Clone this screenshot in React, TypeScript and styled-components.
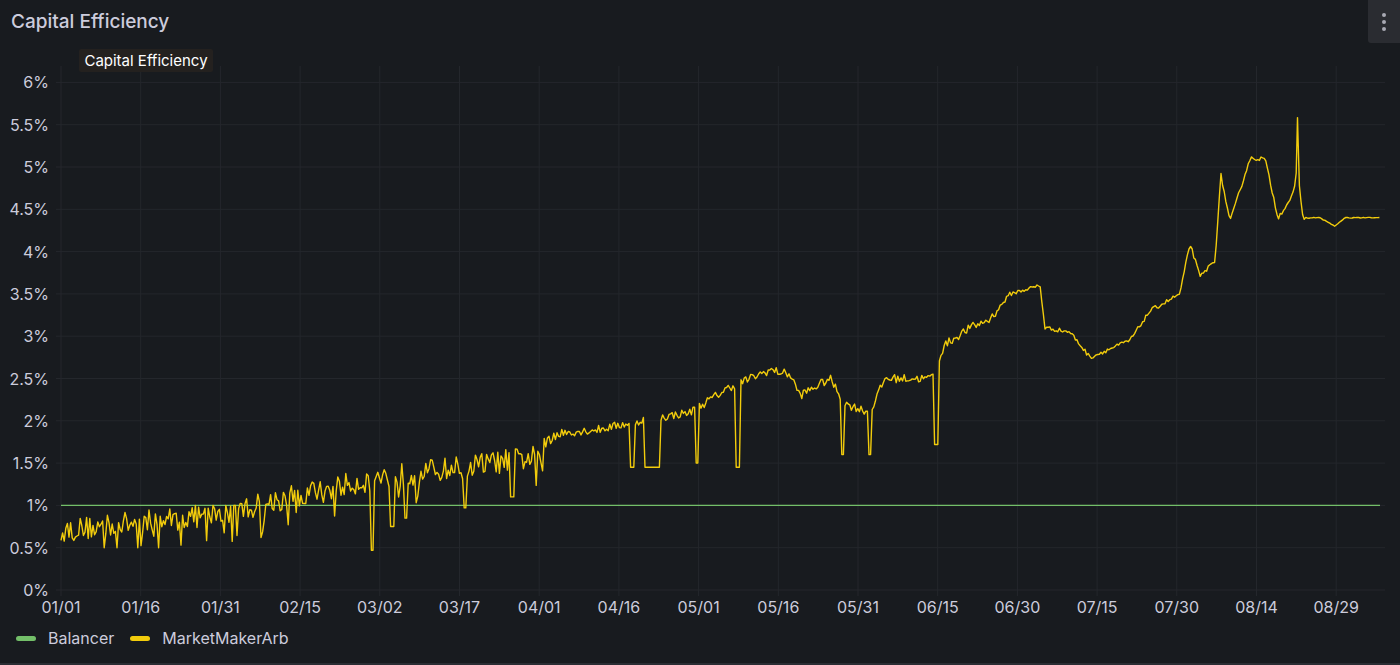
import React from "react";
import styled, { createGlobalStyle } from "styled-components";

const Global = createGlobalStyle`
  html, body { margin: 0; padding: 0; background: #111217; }
  body { font-family: Inter, "Noto Sans", sans-serif; }
`;

const Panel = styled.div`
  width: 1400px; height: 665px; box-sizing: border-box;
  background: #181b1f; border-bottom: 2px solid #2a2d33;
  display: flex; flex-direction: column; overflow: hidden;
`;
const Header = styled.div`
  height: 44px; display: flex; align-items: flex-start; justify-content: space-between;
`;
const Title = styled.h2`
  margin: 0; padding: 10px 0 0 11px; font-size: 19px; font-weight: 500; color: #ccccdc;
`;
const MenuButton = styled.div`
  width: 32px; height: 43px; background: #2a2c31; border-bottom-left-radius: 3px;
  display: flex; flex-direction: column; align-items: center; justify-content: center; gap: 3px;
`;
const Dot = styled.span`
  width: 4px; height: 4px; border-radius: 50%; background: #a8a9b3;
`;
const Chart = styled.svg`
  display: block; width: 1400px; height: 578px;
  font-family: Inter, "Noto Sans", sans-serif;
`;
const Legend = styled.div`
  display: flex; align-items: center; gap: 16px; padding: 6px 0 0 16px;
  font-size: 16px; color: #ccccdc;
`;
const LegendItem = styled.div`
  display: flex; align-items: center; gap: 12px;
`;
const Swatch = styled.span<{ $c: string }>`
  width: 20px; height: 5px; border-radius: 3px; background: ${p => p.$c};
`;

const X0 = 61, XS = 79.7;
const yOf = (v: number) => 590 - v * 84.6;
const xLabels = ["01/01","01/16","01/31","02/15","03/02","03/17","04/01","04/16","05/01","05/16","05/31","06/15","06/30","07/15","07/30","08/14","08/29"];
const yLabels = ["0%","0.5%","1%","1.5%","2%","2.5%","3%","3.5%","4%","4.5%","5%","5.5%","6%"];

const keys: [number, number][] = [
  [61,0.7],[140,0.8],[220,0.9],[300,1.12],[380,1.33],[460,1.45],[540,1.58],[555,1.85],[600,1.9],[640,2.0],[690,2.1],[730,2.4],[770,2.6],[790,2.55],[800,2.3],[830,2.5],[845,2.2],[870,2.1],[885,2.5],[930,2.5],[945,2.9],[970,3.1],[990,3.2],[1010,3.5],[1040,3.6],[1045,3.1],[1070,3.05],[1090,2.75],[1110,2.85],[1130,2.95],[1150,3.3],[1180,3.5],[1190,4.1],[1200,3.7],[1215,3.9],[1221,4.9],[1230,4.35],[1250,5.1],[1265,5.1],[1278,4.4],[1292,4.65],[1296,4.8],[1297.5,5.6],[1299,4.8],[1303,4.4],[1320,4.4],[1335,4.3],[1345,4.4],[1380,4.4]
];
const dips: [number, number, number][] = [
  [372,0.47,2],[392,0.75,2],[632,1.45,2],[652,1.45,8],[697,1.5,2],[738,1.45,2],[843,1.6,2],[870,1.6,2],[936,1.72,2],[512,1.1,2],[465,0.97,2],[406,0.85,2]
];

function base(x: number) {
  for (let i = 0; i < keys.length - 1; i++) {
    const [a, va] = keys[i], [b, vb] = keys[i + 1];
    if (x >= a && x <= b) return va + (vb - va) * (x - a) / (b - a);
  }
  return 4.4;
}

function buildPath() {
  let s = 12345;
  const rnd = () => { s = (s * 16807) % 2147483647; return s / 2147483647; };
  const xs: number[] = [];
  for (let x = 61; x <= 1380; x += 1.6) xs.push(x);
  xs.push(1297.5);
  xs.sort((a, b) => a - b);
  const pts: string[] = [];
  for (const x of xs) {
    let v = base(x);
    const amp = x < 560 ? 0.14 : x < 1000 ? 0.05 : 0.025;
    v += (rnd() - 0.5) * 2 * amp;
    if (x < 560 && rnd() < 0.08) v -= 0.15 + rnd() * 0.25;
    if (x < 240 && v > 1.0) v = 1.0;
    if (x < 240 && v < 0.5) v = 0.5;
    if (x > 1305) v = base(x) + (rnd() - 0.5) * 0.01;
    for (const [dx, dv, w] of dips) if (Math.abs(x - dx) < w) v = dv;
    pts.push(`${x.toFixed(1)},${yOf(v).toFixed(1)}`);
  }
  return "M" + pts.join("L");
}
const path = buildPath();

export default function App() {
  return (
    <Panel>
      <Global />
      <Header>
        <Title>Capital Efficiency</Title>
        <MenuButton><Dot /><Dot /><Dot /></MenuButton>
      </Header>
      <Chart viewBox="0 44 1400 578">
        {yLabels.map((l, i) => (
          <g key={l}>
            <line x1={56} x2={1385} y1={yOf(i * 0.5)} y2={yOf(i * 0.5)} stroke="#24272c" strokeWidth={1} />
            <text x={49} y={yOf(i * 0.5) + 6} textAnchor="end" fill="#ccccdc" fontSize={16}>{l}</text>
          </g>
        ))}
        {xLabels.map((l, i) => (
          <g key={l}>
            <line x1={X0 + i * XS} x2={X0 + i * XS} y1={66} y2={596} stroke="#24272c" strokeWidth={1} />
            <text x={X0 + i * XS} y={613} textAnchor="middle" fill="#ccccdc" fontSize={16}>{l}</text>
          </g>
        ))}
        <line x1={61} x2={1380} y1={yOf(1)} y2={yOf(1)} stroke="#73bf69" strokeWidth={1.2} />
        <path d={path} fill="none" stroke="#f2cc0c" strokeWidth={1.4} strokeLinejoin="round" />
        <rect x={79} y={49} width={134} height={23} fill="#24211f" rx={2} />
        <text x={146} y={66} textAnchor="middle" fill="#ffffff" fontSize={15}>Capital Efficiency</text>
      </Chart>
      <Legend>
        <LegendItem><Swatch $c="#73bf69" />Balancer</LegendItem>
        <LegendItem><Swatch $c="#f2cc0c" />MarketMakerArb</LegendItem>
      </Legend>
    </Panel>
  );
}
